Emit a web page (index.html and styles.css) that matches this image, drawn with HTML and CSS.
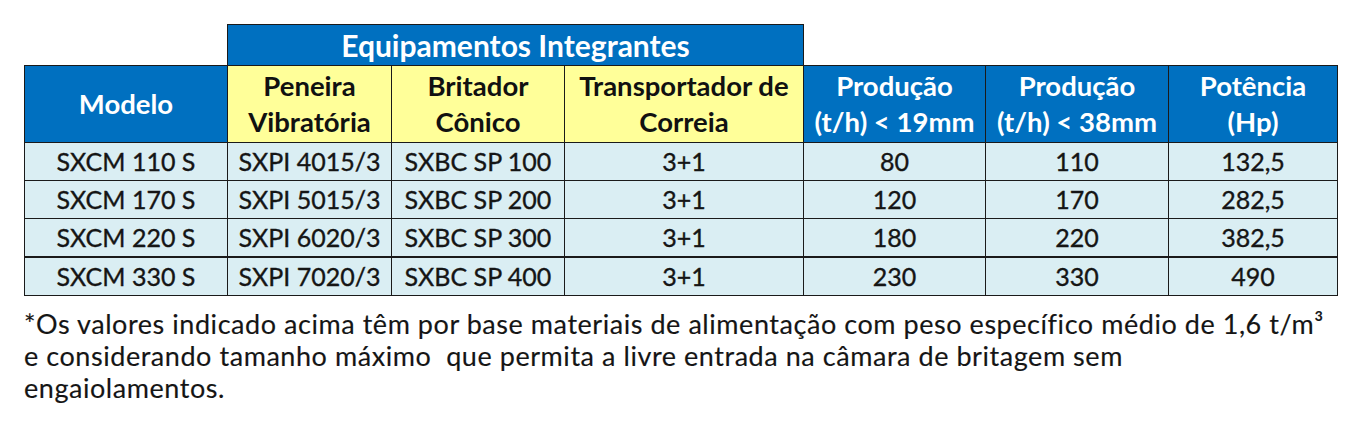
FILE: index.html
```html
<!DOCTYPE html>
<html lang="pt">
<head>
<meta charset="utf-8">
<title>Tabela</title>
<link rel="stylesheet" href="styles.css">
</head>
<body>
<div class="page">
<table class="spec">
  <colgroup>
    <col class="c-modelo"><col class="c-pen"><col class="c-brit"><col class="c-trans"><col class="c-p19"><col class="c-p38"><col class="c-pot">
  </colgroup>
  <thead>
    <tr class="group-row">
      <th class="blank"></th>
      <th class="group" colspan="3">Equipamentos Integrantes</th>
      <th class="blank" colspan="3"></th>
    </tr>
    <tr class="head-row">
      <th class="blue">Modelo</th>
      <th class="yellow">Peneira<br>Vibratória</th>
      <th class="yellow">Britador<br>Cônico</th>
      <th class="yellow">Transportador de<br>Correia</th>
      <th class="blue">Produção<br>(t/h) &lt; 19mm</th>
      <th class="blue">Produção<br>(t/h) &lt; 38mm</th>
      <th class="blue">Potência<br>(Hp)</th>
    </tr>
  </thead>
  <tbody>
    <tr><td>SXCM 110 S</td><td>SXPI 4015/3</td><td>SXBC SP 100</td><td>3+1</td><td>80</td><td>110</td><td>132,5</td></tr>
    <tr><td>SXCM 170 S</td><td>SXPI 5015/3</td><td>SXBC SP 200</td><td>3+1</td><td>120</td><td>170</td><td>282,5</td></tr>
    <tr><td>SXCM 220 S</td><td>SXPI 6020/3</td><td>SXBC SP 300</td><td>3+1</td><td>180</td><td>220</td><td>382,5</td></tr>
    <tr class="last"><td>SXCM 330 S</td><td>SXPI 7020/3</td><td>SXBC SP 400</td><td>3+1</td><td>230</td><td>330</td><td>490</td></tr>
  </tbody>
</table>
<p class="note">*Os valores indicado acima têm por base materiais de alimentação com peso específico médio de 1,6 t/m³<br>e considerando tamanho máximo&nbsp; que permita a livre entrada na câmara de britagem sem<br>engaiolamentos.</p>
</div>
</body>
</html>
```

FILE: styles.css
```css
html, body {
  margin: 0;
  padding: 0;
  background: #ffffff;
}
.page {
  padding: 24px 0 0 24px;
  font-family: "Lato", "Open Sans", sans-serif;
  color: #151515;
}
.spec {
  border-collapse: collapse;
  table-layout: fixed;
  width: 1313px;
}
.c-modelo { width: 203px; }
.c-pen { width: 164px; }
.c-brit { width: 173px; }
.c-trans { width: 239px; }
.c-p19 { width: 182px; }
.c-p38 { width: 183px; }
.c-pot { width: 169px; }
.spec th, .spec td {
  padding: 0;
  text-align: center;
  border: 1px solid #1a1a1a;
  white-space: nowrap;
}
.spec th {
  font-weight: 700;
  font-size: 27.5px;
  line-height: 36px;
}
.spec th.blank {
  border: none;
  border-bottom: 1px solid #1a1a1a;
  background: transparent;
}
.group-row th.group {
  height: 40px;
  background: #0070c0;
  color: #ffffff;
  font-size: 30px;
  line-height: 40px;
}
.head-row th {
  height: 76px;
}
.blue {
  background: #0070c0;
  color: #ffffff;
}
.yellow {
  background: #ffff99;
  color: #111111;
}
.spec td {
  background: #daeef3;
  font-size: 25px;
  height: 37px;
  line-height: 37px;
  -webkit-text-stroke: 0.35px #151515;
}
.spec tr.last td {
  border-top: 2px solid #1a1a1a;
}
.note {
  margin: 12px 0 0 0;
  font-size: 27px;
  letter-spacing: 0.55px;
  line-height: 32px;
  color: #151515;
  -webkit-text-stroke: 0.15px #151515;
  white-space: nowrap;
}
```
